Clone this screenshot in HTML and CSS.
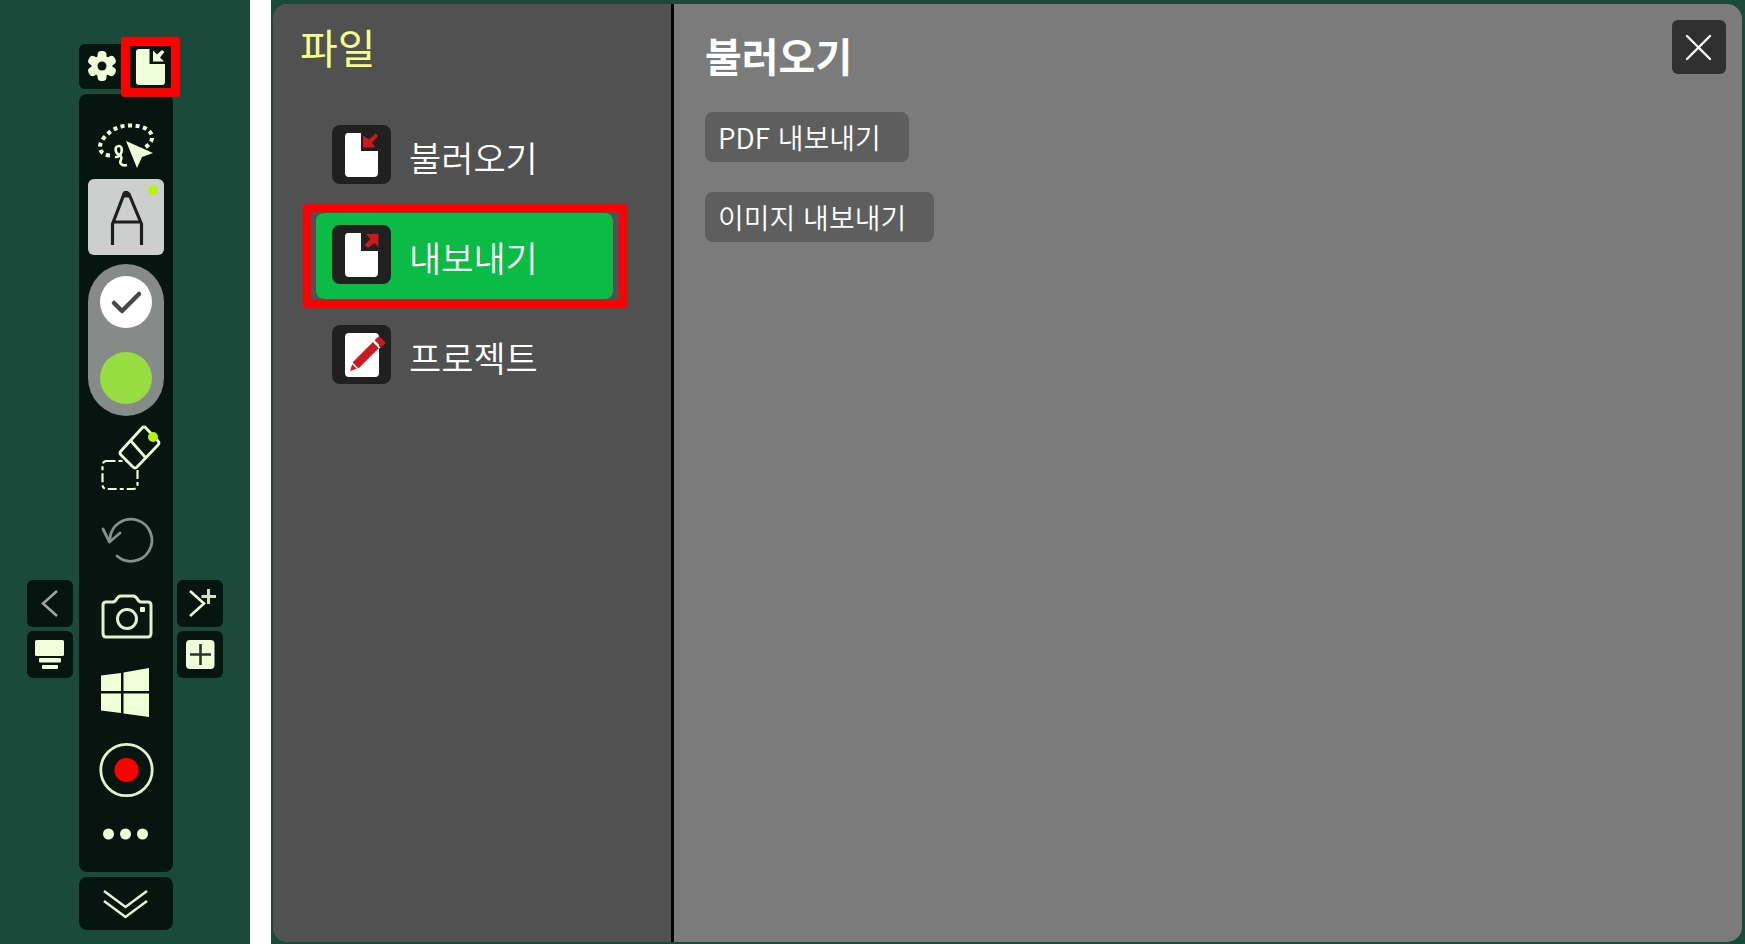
FILE: index.html
```
<!DOCTYPE html>
<html lang="ko">
<head>
  <meta charset="UTF-8">
  <title>파일 - 내보내기</title>
  <link rel="stylesheet" href="styles.css">
</head>
<body>
  <div class="dock">
    <div class="side">
      <button type="button" class="side-button" aria-label="이전 페이지">
        <svg width="46" height="47" viewBox="0 0 46 47" fill="none" stroke="#9fa6a2" stroke-width="2.5"><path d="M30 11 16 23.500 30 36"/></svg>
      </button>
      <button type="button" class="side-button" aria-label="페이지 목록">
        <svg width="46" height="47" viewBox="0 0 46 47" fill="#efffd8"><rect x="8" y="9" width="29" height="16" rx="1.500"/><rect x="12" y="27" width="22" height="4.500" rx="1"/><rect x="15" y="34" width="16" height="4" rx="1"/></svg>
      </button>
    </div>

    <div class="main-column">
      <div class="top-buttons">
        <button type="button" class="top-button" aria-label="설정">
          <svg width="46" height="45" viewBox="0 0 46 45">
            <g fill="#efffd8">
              <circle cx="23" cy="22" r="10.500"/>
              <rect x="18.500" y="7" width="9" height="30" rx="4"/>
              <rect x="18.500" y="7" width="9" height="30" rx="4" transform="rotate(60 23 22)"/>
              <rect x="18.500" y="7" width="9" height="30" rx="4" transform="rotate(120 23 22)"/>
            </g>
            <circle cx="23" cy="22" r="4.500" fill="#071510"/>
          </svg>
        </button>
        <button type="button" class="top-button marked" aria-label="파일">
          <svg width="46" height="45" viewBox="0 0 46 45">
            <path d="M13 5H23.500V20H39V38q0 3-3 3H13q-3 0-3-3V8q0-3 3-3Z" fill="#efffd8"/>
            <path d="M27 6.500V17.500H38L34 13.500 38.500 8 36 6 31 10.500Z" fill="#efffd8"/>
          </svg>
        </button>
      </div>

      <div class="toolbar">
        <button type="button" class="tool" aria-label="올가미 선택">
          <svg width="76" height="76" viewBox="0 0 76 76" fill="none">
            <path d="M22 52.500C12 52 9 44 15 36 23 26 32 22.500 42 22.500 54 22.500 63 26 64 34 64.500 39 60 43 54 46" stroke="#efffd8" stroke-width="4" stroke-dasharray="4 3.500"/>
            <path d="M27 54c7 1 9-11 4-11-5 0-4 7 0 9 6 3-1 6 2 9 2 2 6 1 6 1" stroke="#efffd8" stroke-width="2.600"/>
            <path d="M38 38 65 50 54 54 49 65Z" fill="#efffd8" stroke="#071510" stroke-width="1" paint-order="stroke"/>
          </svg>
        </button>
        <button type="button" class="tool pen" aria-label="펜">
          <svg width="76" height="76" viewBox="0 0 76 76" fill="none" stroke="#1e1e1e" stroke-width="3.200">
            <path d="M24.500 66V45L36 15H41L53.500 45V66M25 43H53"/>
            <path d="M34 18 36 12.500h4L43 18Z" fill="#1e1e1e" stroke-width="1"/>
            <circle cx="65" cy="11" r="5" fill="#b9f014" stroke="none"/>
          </svg>
        </button>
        <div class="colors">
          <button type="button" class="color white" aria-label="흰색">
            <svg width="52" height="52" viewBox="0 0 52 52" fill="none" stroke="#474747" stroke-width="4.500" stroke-linecap="round" stroke-linejoin="round"><path d="M14 27 22 35 39 18"/></svg>
          </button>
          <button type="button" class="color green" aria-label="연두색"></button>
        </div>
        <button type="button" class="tool eraser" aria-label="지우개">
          <svg width="76" height="86" viewBox="0 0 76 86" fill="none" stroke="#efffd8">
            <rect x="14.500" y="45" width="35" height="28" rx="4" stroke-width="2.200" stroke-dasharray="9 3 4 3"/>
            <path d="M33 35 54 12q2-2 4 0L70 25q2 2 0 4L49 51q-2 2-4 0L33 39q-2-2 0-4Z" fill="#071510" stroke-width="2.800"/>
            <path d="M43 25 57 41" stroke-width="2.800"/>
            <circle cx="65" cy="21" r="5" fill="#b9f014" stroke="none"/>
          </svg>
        </button>
        <button type="button" class="tool" aria-label="실행 취소">
          <svg width="76" height="76" viewBox="0 0 76 76" fill="none" stroke="#84918b" stroke-width="2.800" stroke-linecap="round" stroke-linejoin="round"><path d="M22 36A21 21 0 1 1 29 54M15 27 21.500 40 32 31"/></svg>
        </button>
        <button type="button" class="tool" aria-label="화면 캡처">
          <svg width="76" height="76" viewBox="0 0 76 76" fill="none" stroke="#e2f1cf" stroke-width="3">
            <path d="M18 24h6q3 0 4-2 2-4 5-4h12q3 0 5 4 1 2 4 2h6q3 0 3 3v28q0 4-3 4H18q-3 0-3-4V27q0-3 3-3Z"/>
            <circle cx="39" cy="41" r="9.500"/>
            <rect x="52" y="29" width="5" height="5" rx="1" fill="#efffd8" stroke="none"/>
          </svg>
        </button>
        <button type="button" class="tool" aria-label="윈도우">
          <svg width="76" height="76" viewBox="0 0 76 76" fill="#efffd8"><path d="M13 21.500 33 19V37H13ZM35.500 18.500 61 14V37H35.500ZM13 39.500H33V59L13 56.500ZM35.500 39.500H61V63L35.500 59.500Z"/></svg>
        </button>
        <button type="button" class="tool" aria-label="녹화">
          <svg width="76" height="76" viewBox="0 0 76 76"><circle cx="38.500" cy="40" r="25.700" fill="none" stroke="#e2f1cf" stroke-width="2.800"/><circle cx="38.500" cy="40" r="12" fill="#f00"/></svg>
        </button>
        <button type="button" class="tool more" aria-label="더 보기">
          <svg width="76" height="52" viewBox="0 0 76 52" fill="#efffd8"><circle cx="20.500" cy="28" r="5.500"/><circle cx="37.500" cy="28" r="5.500"/><circle cx="54.500" cy="28" r="5.500"/></svg>
        </button>
      </div>

      <button type="button" class="collapse" aria-label="접기">
        <svg width="76" height="53" viewBox="0 0 76 53" fill="none" stroke="#e2f1cf" stroke-width="2.600"><path d="M16 14 37.500 30 59 14M16 24 37.500 40 59 24"/></svg>
      </button>
    </div>

    <div class="side">
      <button type="button" class="side-button" aria-label="다음 페이지 추가">
        <svg width="46" height="47" viewBox="0 0 46 47" fill="none" stroke="#efffd8" stroke-width="2.600"><path d="M13 11 27 23.500 13 36"/><path d="M31.500 9V24M24.500 16.500H39" stroke="#d3e2c1" stroke-width="3"/></svg>
      </button>
      <button type="button" class="side-button" aria-label="페이지 추가">
        <svg width="46" height="47" viewBox="0 0 46 47"><rect x="9" y="9" width="28.500" height="29" rx="4" fill="#efffd8"/><path d="M23.500 13V34M13 23.500H34" stroke="#26352d" stroke-width="2.600"/></svg>
      </button>
    </div>
  </div>

  <div class="stage">
    <div class="dialog">
      <nav class="menu">
        <h1>파일</h1>
        <button type="button" class="menu-item">
          <svg class="menu-icon" width="59" height="59" viewBox="0 0 59 59">
            <path d="M16 8H29V26H46V48q0 4-4 4H17q-4 0-4-4V12q0-4 3-4Z" fill="#fff"/>
            <path d="M31 10.500V22.500H43.500L40 18 46 11 43.500 8.500 37 14.500Z" fill="#cb1920"/>
          </svg>
          <span>불러오기</span>
        </button>
        <button type="button" class="menu-item selected">
          <svg class="menu-icon" width="59" height="59" viewBox="0 0 59 59">
            <path d="M16 8H29V26H46V48q0 4-4 4H17q-4 0-4-4V12q0-4 3-4Z" fill="#fff"/>
            <path d="M34 9H46.500V22L42.500 18 36 23 32.500 20 38.500 14Z" fill="#cb1920"/>
          </svg>
          <span>내보내기</span>
        </button>
        <button type="button" class="menu-item">
          <svg class="menu-icon" width="59" height="59" viewBox="0 0 59 59">
            <rect x="13" y="8" width="34" height="44" rx="4" fill="#fff"/>
            <path d="M18 46 21 37 41 17 47 23 27 43Z" fill="#cb1920"/>
            <path d="M42.500 15 46 12q1-1 2 0l5 5q1 1 0 2L49 22Z" fill="#cb1920"/>
            <path d="M41 16 48 23M20 38 26 44" stroke="#fff" stroke-width="1.500"/>
          </svg>
          <span>프로젝트</span>
        </button>
      </nav>

      <main class="content">
        <div class="content-header">
          <h2>불러오기</h2>
          <button type="button" class="close" aria-label="닫기">
            <svg width="54" height="54" viewBox="0 0 54 54" stroke="#fff" stroke-width="2.400" stroke-linecap="round"><path d="M15 16 38 39M38 16 15 39"/></svg>
          </button>
        </div>
        <div class="actions">
          <button type="button" class="action">PDF 내보내기</button>
          <button type="button" class="action">이미지 내보내기</button>
        </div>
      </main>
    </div>
  </div>
</body>
</html>
```
FILE: styles.css
```
* {
  box-sizing: border-box;
}

body {
  margin: 0;
  min-height: 100vh;
  display: flex;
  gap: 21px;
  background-color: #fff;
  font-family: "Noto Sans CJK KR", sans-serif;
}

h1,
h2 {
  margin: 0;
}

button {
  border: 0;
  padding: 0;
  background: none;
  color: inherit;
  font-family: inherit;
  cursor: pointer;
}

svg {
  display: block;
}

/* 왼쪽 도구 모음 */
.dock {
  flex: none;
  display: flex;
  gap: 4px;
  padding: 44px 27px 14px;
  background-color: #1c4a3a;
}

.side {
  align-self: flex-end;
  display: flex;
  flex-direction: column;
  gap: 4px;
  padding-bottom: 252px;
}

.side-button {
  border-radius: 6px;
  background-color: #071510;
}

.main-column {
  width: 94px;
  margin-left: 2px;
  display: flex;
  flex-direction: column;
  gap: 5px;
}

.top-buttons {
  display: flex;
  border-radius: 6px;
  background-color: #071510;
}

.top-button {
  width: 50%;
}

/* 빨간 강조 테두리 */
.marked {
  position: relative;
}

.marked::after,
.selected::after {
  content: "";
  position: absolute;
  border: 8px solid #f00;
  border-radius: 3px;
}

.marked::after {
  border-width: 9px;
  inset: -7px -7px -8px -5px;
}

.toolbar {
  flex: 1;
  display: flex;
  flex-direction: column;
  align-items: center;
  padding: 9px 0;
  border-radius: 8px;
  background-color: #071510;
}

.pen {
  border-radius: 6px;
  background-color: #cdcfce;
}

.colors {
  display: flex;
  flex-direction: column;
  align-items: center;
  gap: 24px;
  margin-top: 9px;
  padding: 12px;
  border-radius: 38px;
  background-color: #868a88;
}

.color {
  width: 52px;
  height: 52px;
  border-radius: 50%;
}

.white {
  background-color: #fff;
}

.green {
  background-color: #97dc40;
}

.collapse {
  display: flex;
  justify-content: center;
  border-radius: 8px;
  background-color: #071510;
}

/* 파일 창 */
.stage {
  flex: 1;
  display: flex;
  padding: 4px 3px 2px 2px;
  background-color: #1c4a3a;
}

.dialog {
  flex: 1;
  display: flex;
  overflow: hidden;
  border-radius: 15px;
  background-color: #7b7b7b;
}

.menu {
  width: 401px;
  display: flex;
  flex-direction: column;
  gap: 14px;
  padding: 13px 58px 0 43px;
  border-right: 3px solid #000;
  background-color: #515151;
  color: #fff;
}

.menu h1 {
  margin: 0 -16px 24px;
  color: #f4ff8c;
  font-size: 41px;
  font-weight: 400;
  line-height: 58px;
}

.menu-item {
  display: flex;
  align-items: center;
  gap: 18px;
  height: 86px;
  padding: 0 16px 4px;
  border-radius: 8px;
  font-size: 35px;
  font-weight: 350;
  line-height: 50px;
}

.menu-icon {
  border-radius: 8px;
  background-color: #202020;
}

.menu-item span {
  padding-top: 6px;
}

.selected {
  position: relative;
  background-color: #0cba46;
}

.selected::after {
  inset: -9px -14px -9px -13px;
}

.content {
  flex: 1;
  padding: 16px 16px 0 31px;
  color: #fff;
}

.content-header {
  display: flex;
  justify-content: space-between;
  align-items: flex-start;
}

.content-header h2 {
  padding-top: 6px;
  font-size: 40px;
  font-weight: 700;
  line-height: 58px;
}

.close {
  border-radius: 6px;
  background-color: #303030;
}

.actions {
  display: flex;
  flex-direction: column;
  align-items: flex-start;
  gap: 30px;
  margin-top: 28px;
}

.action {
  height: 50px;
  padding: 0 28px 0 13px;
  border-radius: 8px;
  background-color: #5e5e5e;
  font-size: 28px;
  font-weight: 350;
  line-height: 50px;
}
```
